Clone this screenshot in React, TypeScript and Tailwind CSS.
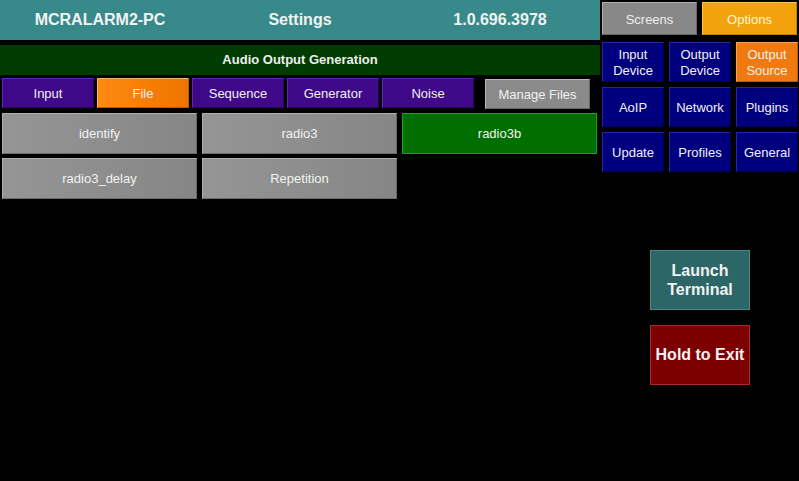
import React from "react";

const font = { fontFamily: '"Liberation Sans", Arial, sans-serif' };

function Tab({ label, active }: { label: string; active?: boolean }) {
  return (
    <div
      className={
        "w-[92px] h-[30px] flex items-center justify-center pt-[1px] text-[13px] text-[#f0f0f0] border " +
        (active
          ? "bg-gradient-to-r from-[#ff8a10] to-[#ee7400] border-t-[#ffb060] border-l-[#ffb060] border-r-[#c05a00] border-b-[#c05a00]"
          : "bg-[#3e0888] border-t-[#5a2ab0] border-l-[#5a2ab0] border-r-[#2a0560] border-b-[#2a0560]")
      }
    >
      {label}
    </div>
  );
}

function FileBtn({ label, active }: { label: string; active?: boolean }) {
  return (
    <div
      className={
        "h-[41px] flex items-center justify-center text-[13px] text-[#f2f2f2] border " +
        (active
          ? "bg-[#006f00] border-[#1ea21e]"
          : "bg-gradient-to-r from-[#959595] to-[#868686] border-t-[#b0b0b0] border-l-[#b0b0b0] border-r-[#6a6a6a] border-b-[#6a6a6a]")
      }
    >
      {label}
    </div>
  );
}

function GridBtn({ label, orange }: { label: React.ReactNode; orange?: boolean }) {
  return (
    <div
      className={
        "h-[40px] flex items-center justify-center pt-[2px] text-center leading-[16px] text-[13px] text-[#f0f0f0] border " +
        (orange
          ? "bg-[#f07a10] border-t-[#ffa050] border-l-[#ffa050] border-r-[#c05a00] border-b-[#c05a00]"
          : "bg-[#00007e] border-t-[#2525a8] border-l-[#2525a8] border-r-[#000050] border-b-[#000050]")
      }
    >
      {label}
    </div>
  );
}

export default function App() {
  return (
    <div className="w-[799px] h-[481px] bg-black flex overflow-hidden" style={font}>
      {/* Left column */}
      <div className="w-[600px] flex flex-col">
        <div className="h-[40px] bg-[#388a8a] flex items-center text-[16px] font-bold text-[#f2f2f2]">
          <div className="w-[200px] text-center">MCRALARM2-PC</div>
          <div className="w-[200px] text-center">Settings</div>
          <div className="w-[200px] text-center">1.0.696.3978</div>
        </div>
        <div className="mt-[5px] h-[30px] bg-[#003c00] flex items-center justify-center text-[13px] font-bold text-[#eeeeee]">
          Audio Output Generation
        </div>
        <div className="mt-[3px] flex items-start pl-[2px]">
          <div className="flex gap-[3px]">
            <Tab label="Input" />
            <Tab label="File" active />
            <Tab label="Sequence" />
            <Tab label="Generator" />
            <Tab label="Noise" />
          </div>
          <div className="ml-[11px] mt-[1px] w-[105px] h-[30px] flex items-center justify-center pt-[1px] text-[13px] text-[#f0f0f0] bg-[#8a8a8a] border border-t-[#b8b8b8] border-l-[#b8b8b8] border-r-[#666666] border-b-[#666666]">
            Manage Files
          </div>
        </div>
        <div className="mt-[4px] ml-[2px] grid grid-cols-[195px_195px_195px] gap-x-[5px] gap-y-[4px]">
          <FileBtn label="identify" />
          <FileBtn label="radio3" />
          <FileBtn label="radio3b" active />
          <FileBtn label="radio3_delay" />
          <FileBtn label="Repetition" />
        </div>
      </div>

      {/* Right column */}
      <div className="ml-[2px] w-[196px] flex flex-col">
        <div className="mt-[2px] flex gap-[5px]">
          <div className="w-[95px] h-[33px] flex items-center justify-center pt-[2px] text-[13px] text-[#eeeeee] bg-[#888888] border border-t-[#b0b0b0] border-l-[#b0b0b0] border-r-[#666666] border-b-[#666666]">
            Screens
          </div>
          <div className="w-[95px] h-[33px] flex items-center justify-center pt-[2px] text-[13px] text-[#fff6dd] bg-[#f2a20c] border border-t-[#ffc050] border-l-[#ffc050] border-r-[#c88000] border-b-[#c88000]">
            Options
          </div>
        </div>
        <div className="mt-[7px] grid grid-cols-[62px_62px_62px] gap-[5px]">
          <GridBtn label={<>Input<br />Device</>} />
          <GridBtn label={<>Output<br />Device</>} />
          <GridBtn label={<>Output<br />Source</>} orange />
          <GridBtn label="AoIP" />
          <GridBtn label="Network" />
          <GridBtn label="Plugins" />
          <GridBtn label="Update" />
          <GridBtn label="Profiles" />
          <GridBtn label="General" />
        </div>
        <div className="mt-[78px] flex flex-col items-center gap-[15px]">
          <div className="w-[100px] h-[60px] flex items-center justify-center text-center leading-[19px] text-[16px] font-bold text-[#f2f2f2] bg-[#2c6666] border border-[#4a8a8a]">
            Launch<br />Terminal
          </div>
          <div className="w-[100px] h-[60px] flex items-center justify-center text-[16px] font-bold text-[#f2f2f2] bg-[#7c0000] border border-[#a03030]">
            Hold to Exit
          </div>
        </div>
      </div>
    </div>
  );
}
